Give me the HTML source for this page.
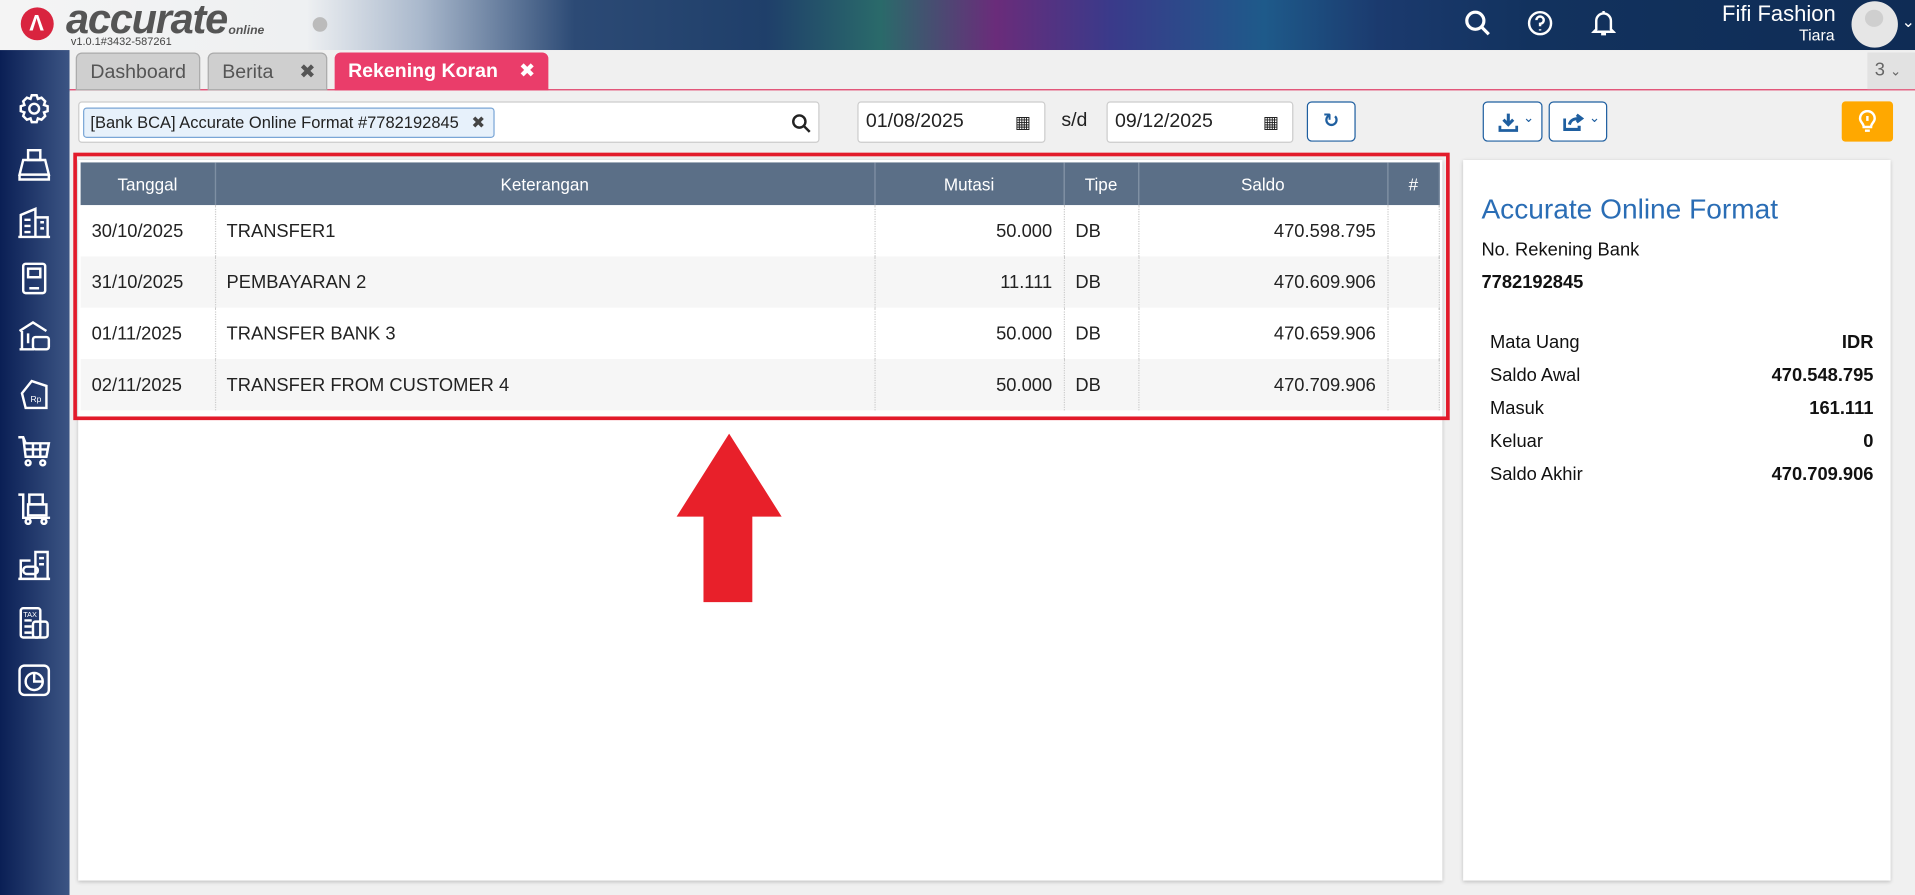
<!DOCTYPE html>
<html><head><meta charset="utf-8">
<style>
*{box-sizing:border-box;margin:0;padding:0}
body{width:1915px;height:895px;overflow:hidden;background:#f0f0f0;font-family:"Liberation Sans","DejaVu Sans",sans-serif}
#w{width:1568px;height:733px;transform:scale(1.22131);transform-origin:0 0;position:relative;background:#f0f0f0}
.abs{position:absolute}
#hdr{left:0;top:0;width:1568px;height:41px;background:linear-gradient(90deg,#f4f4f4 0,#eef0f2 16%,#a9b8cc 22%,#2c4a75 30%,#1f3f6a 40%,#2a6a6a 46%,#6a2c7a 52%,#3a3a8a 58%,#1e5a8a 66%,#1b3a6e 72%,#12325e 80%,#0f2c55 100%)}
#side{left:0;top:41px;width:57px;height:692px;background:linear-gradient(90deg,#0a1f55,#3c5584)}
.tab{top:43px;height:31px;border-radius:5px 5px 0 0;font-size:16px;line-height:31px;padding-left:11px}
.ic{position:absolute;left:14px;width:28px;height:28px}
.btn{background:#fff;border:1px solid #1f5fa0;border-radius:4px;height:33px;top:83px}
table{border-collapse:collapse;font-size:15px;color:#222}
th{background:#5b6f87;color:#fff;font-weight:normal;height:35px;border-right:1px solid #7e8fa3;font-size:14px}
td{height:42px;border-right:1px dotted #ccc;padding:0 9px}
tr.a td{background:#fff}tr.b td{background:#f6f6f6}
.r{text-align:right}
.rp{font-size:15px;color:#111}
</style></head><body><div id="w">
<div id="hdr" class="abs"></div>
<div class="abs" style="left:17px;top:6px;width:27px;height:27px;border-radius:50%;background:#d9243f"></div>
<div class="abs" style="left:24px;top:9px;color:#fff;font-size:18px;font-weight:bold">&#923;</div>
<div class="abs" style="left:54px;top:-3px;font-size:34px;font-style:italic;color:#555;font-weight:bold;letter-spacing:-1px">accurate</div>
<div class="abs" style="left:187px;top:20px;font-size:10px;font-style:italic;color:#555;font-weight:bold">online</div>
<div class="abs" style="left:58px;top:29px;font-size:9px;color:#444">v1.0.1#3432-587261</div>
<div class="abs" style="left:256px;top:14px;width:12px;height:12px;border-radius:50%;background:#bbb"></div>
<svg class="abs" style="left:1198px;top:7px" width="24" height="24" viewBox="0 0 24 24" fill="none" stroke="#fff" stroke-width="2.6"><circle cx="10" cy="10" r="7"/><path d="M15 15l6 6"/></svg>
<svg class="abs" style="left:1250px;top:8px" width="22" height="22" viewBox="0 0 22 22" fill="none" stroke="#fff" stroke-width="2"><circle cx="11" cy="11" r="9"/><path d="M8 8.5a3 3 0 1 1 3 3v2M11 16v1"/></svg>
<svg class="abs" style="left:1303px;top:7px" width="20" height="24" viewBox="0 0 20 24" fill="none" stroke="#fff" stroke-width="2"><path d="M4 17V10a6 6 0 0 1 12 0v7l2 2H2zM8 21h4M10 2v2"/></svg>
<div class="abs" style="left:1410px;top:1px;font-size:18px;color:#fff">Fifi Fashion</div>
<div class="abs" style="left:1473px;top:21px;font-size:13px;color:#fff">Tiara</div>
<div class="abs" style="left:1516px;top:1px;width:38px;height:38px;border-radius:50%;background:#e6e6e6"></div>
<div class="abs" style="left:1527px;top:8px;width:15px;height:14px;border-radius:50%;background:#cfcfcf"></div>
<div class="abs" style="left:1557px;top:10px;color:#fff;font-size:13px">&#8964;</div>
<div id="side" class="abs">
<svg class="ic" style="top:34px" viewBox="0 0 28 28" fill="none" stroke="#fff" stroke-width="2"><circle cx="14" cy="14" r="4"/><path d="M12 3h4l1 3 3-1 3 3-1 3 3 1v4l-3 1 1 3-3 3-3-1-1 3h-4l-1-3-3 1-3-3 1-3-3-1v-4l3-1-1-3 3-3 3 1z"/></svg>
<svg class="ic" style="top:80px" viewBox="0 0 28 28" fill="none" stroke="#fff" stroke-width="2"><rect x="9" y="2" width="10" height="8"/><path d="M5 10h18l3 12H2zM2 22v4h24v-4"/></svg>
<svg class="ic" style="top:127px" viewBox="0 0 28 28" fill="none" stroke="#fff" stroke-width="2"><path d="M3 26V8l12-5v23M15 10h10v16M1 26h26M6 12h5M6 17h5M6 22h5M19 14h3M19 19h3"/></svg>
<svg class="ic" style="top:173px" viewBox="0 0 28 28" fill="none" stroke="#fff" stroke-width="2"><rect x="5" y="2" width="18" height="24" rx="2"/><rect x="9" y="6" width="10" height="7"/><path d="M10 22h8"/></svg>
<svg class="ic" style="top:220px" viewBox="0 0 28 28" fill="none" stroke="#fff" stroke-width="2"><path d="M2 10L13 3l11 7M4 10v14M9 12v8M2 25h12"/><rect x="13" y="15" width="13" height="10" rx="2"/></svg>
<svg class="ic" style="top:267px" viewBox="0 0 28 28" fill="none" stroke="#fff" stroke-width="2"><path d="M12 4L4 14l3 12h17V8z"/><text x="11" y="21" font-size="7" fill="#fff" stroke="none">Rp</text></svg>
<svg class="ic" style="top:314px" viewBox="0 0 28 28" fill="none" stroke="#fff" stroke-width="2"><path d="M1 3h4l2 5h19l-2 11H7L5 3M7 13h18M13 8v11M19 8v11"/><circle cx="9" cy="24" r="2"/><circle cx="21" cy="24" r="2"/></svg>
<svg class="ic" style="top:361px" viewBox="0 0 28 28" fill="none" stroke="#fff" stroke-width="2"><path d="M1 3h4v19h22"/><rect x="10" y="3" width="11" height="8"/><rect x="9" y="11" width="15" height="9"/><circle cx="9" cy="25" r="2"/><circle cx="22" cy="25" r="2"/></svg>
<svg class="ic" style="top:408px" viewBox="0 0 28 28" fill="none" stroke="#fff" stroke-width="2"><path d="M3 24V10h8M15 24V3h10v21M1 25h26M18 8h4M18 13h4"/><rect x="5" y="15" width="12" height="6" rx="3"/></svg>
<svg class="ic" style="top:455px" viewBox="0 0 28 28" fill="none" stroke="#fff" stroke-width="2"><rect x="3" y="2" width="16" height="24" rx="2"/><rect x="13" y="13" width="12" height="13" rx="2"/><path d="M6 12h6M6 17h6M6 22h6"/><text x="5" y="9" font-size="6" fill="#fff" stroke="none">TAX</text></svg>
<svg class="ic" style="top:502px" viewBox="0 0 28 28" fill="none" stroke="#fff" stroke-width="2"><rect x="2" y="2" width="24" height="24" rx="4"/><circle cx="14" cy="15" r="7"/><path d="M14 8v7h7"/></svg>
</div>
<div class="abs" style="left:57px;top:41px;width:1511px;height:33px;background:#f0f0f0;border-bottom:1px solid #e03a64"></div>
<div class="abs tab" style="left:62px;width:102px;background:#cfcfcf;border:1px solid #aaa;color:#555">Dashboard</div>
<div class="abs tab" style="left:170px;width:98px;background:#cfcfcf;border:1px solid #aaa;color:#555">Berita<span style="position:absolute;left:74px;font-weight:bold">&#10006;</span></div>
<div class="abs tab" style="left:274px;width:175px;background:#ea3d6a;color:#fff;font-weight:bold">Rekening Koran<span style="position:absolute;left:151px">&#10006;</span></div>
<div class="abs" style="left:1529px;top:43px;width:39px;height:30px;background:#e2e2e2;color:#666;font-size:15px;line-height:30px;padding-left:6px">3 <span style="font-size:11px">&#8964;</span></div>
<div class="abs" style="left:57px;top:75px;width:1511px;height:658px;background:#f0f0f0"></div>
<div class="abs" style="left:64px;top:83px;width:607px;height:34px;background:#fff;border:1px solid #ccc;border-radius:3px"></div>
<div class="abs" style="left:68px;top:88px;width:337px;height:25px;background:#e7f1fb;border:1px solid #7aa6d6;border-radius:3px;font-size:13.5px;line-height:23px;padding-left:5px;color:#222">[Bank BCA] Accurate Online Format #7782192845<span style="position:absolute;left:317px;font-weight:bold;color:#444">&#10006;</span></div>
<svg class="abs" style="left:648px;top:93px" width="16" height="16" viewBox="0 0 16 16" fill="none" stroke="#222" stroke-width="2"><circle cx="6.5" cy="6.5" r="5"/><path d="M10 10l5 5"/></svg>
<div class="abs" style="left:702px;top:83px;width:154px;height:34px;background:#fff;border:1px solid #ccc;border-radius:3px;font-size:16px;line-height:32px;padding-left:6px;color:#222">01/08/2025<span style="position:absolute;left:128px;font-size:14px">&#9638;</span></div>
<div class="abs" style="left:869px;top:90px;font-size:16px;color:#222">s/d</div>
<div class="abs" style="left:906px;top:83px;width:153px;height:34px;background:#fff;border:1px solid #ccc;border-radius:3px;font-size:16px;line-height:32px;padding-left:6px;color:#222">09/12/2025<span style="position:absolute;left:127px;font-size:14px">&#9638;</span></div>
<div class="abs btn" style="left:1070px;width:40px;color:#1f5fa0;text-align:center;font-size:16px;line-height:31px;font-weight:bold">&#8635;</div>
<div class="abs btn" style="left:1214px;width:49px"><svg style="position:absolute;left:12px;top:8px" width="16" height="16" viewBox="0 0 16 16" fill="none" stroke="#1f5fa0" stroke-width="2.5"><path d="M8 1v9M4 6l4 4 4-4M1 11v4h14v-4"/></svg><span style="position:absolute;left:32px;top:6px;font-size:11px;color:#1f5fa0">&#8964;</span></div>
<div class="abs btn" style="left:1268px;width:48px"><svg style="position:absolute;left:11px;top:8px" width="17" height="16" viewBox="0 0 17 16" fill="none" stroke="#1f5fa0" stroke-width="2.5"><path d="M1 5v9h12v-3M5 10c1-4 4-5 8-5M11 2l4 3-4 3"/></svg><span style="position:absolute;left:32px;top:6px;font-size:11px;color:#1f5fa0">&#8964;</span></div>
<div class="abs" style="left:1508px;top:83px;width:42px;height:33px;background:#ffa800;border-radius:3px"><svg style="position:absolute;left:13px;top:7px" width="16" height="20" viewBox="0 0 16 20" fill="none" stroke="#fff" stroke-width="2"><path d="M5 14c0-3-3-4-3-7a6 6 0 0 1 12 0c0 3-3 4-3 7zM6 17h4M8 5v4"/></svg></div>
<div class="abs" style="left:64px;top:131px;width:1117px;height:590px;background:#fff;box-shadow:0 1px 3px rgba(0,0,0,.2)"></div>
<table class="abs" style="left:66px;top:133px;width:1113px">
<tr><th style="width:110px">Tanggal</th><th style="width:540px">Keterangan</th><th style="width:155px">Mutasi</th><th style="width:61px">Tipe</th><th style="width:204px">Saldo</th><th>#</th></tr>
<tr class="a"><td>30/10/2025</td><td>TRANSFER1</td><td class="r">50.000</td><td>DB</td><td class="r">470.598.795</td><td></td></tr>
<tr class="b"><td>31/10/2025</td><td>PEMBAYARAN 2</td><td class="r">11.111</td><td>DB</td><td class="r">470.609.906</td><td></td></tr>
<tr class="a"><td>01/11/2025</td><td>TRANSFER BANK 3</td><td class="r">50.000</td><td>DB</td><td class="r">470.659.906</td><td></td></tr>
<tr class="b"><td>02/11/2025</td><td>TRANSFER FROM CUSTOMER 4</td><td class="r">50.000</td><td>DB</td><td class="r">470.709.906</td><td></td></tr>
</table>
<div class="abs" style="left:60px;top:125px;width:1127px;height:219px;border:3px solid #e21b2b"></div>
<svg class="abs" style="left:553px;top:355px" width="88" height="140"><path d="M44 0L87 68H63V138H23V68H1z" fill="#e8202a"/></svg>
<div class="abs" style="left:1198px;top:131px;width:350px;height:590px;background:#fff;box-shadow:0 1px 3px rgba(0,0,0,.2)"></div>
<div class="abs" style="left:1213px;top:158px;font-size:23px;color:#2a6db5">Accurate Online Format</div>
<div class="abs rp" style="left:1213px;top:196px">No. Rekening Bank</div>
<div class="abs rp" style="left:1213px;top:223px;font-weight:bold">7782192845</div>
<div class="abs rp" style="left:1220px;top:272px">Mata Uang</div><div class="abs rp" style="right:34px;top:272px;font-weight:bold">IDR</div>
<div class="abs rp" style="left:1220px;top:299px">Saldo Awal</div><div class="abs rp" style="right:34px;top:299px;font-weight:bold">470.548.795</div>
<div class="abs rp" style="left:1220px;top:326px">Masuk</div><div class="abs rp" style="right:34px;top:326px;font-weight:bold">161.111</div>
<div class="abs rp" style="left:1220px;top:353px">Keluar</div><div class="abs rp" style="right:34px;top:353px;font-weight:bold">0</div>
<div class="abs rp" style="left:1220px;top:380px">Saldo Akhir</div><div class="abs rp" style="right:34px;top:380px;font-weight:bold">470.709.906</div>
</div></body></html>
